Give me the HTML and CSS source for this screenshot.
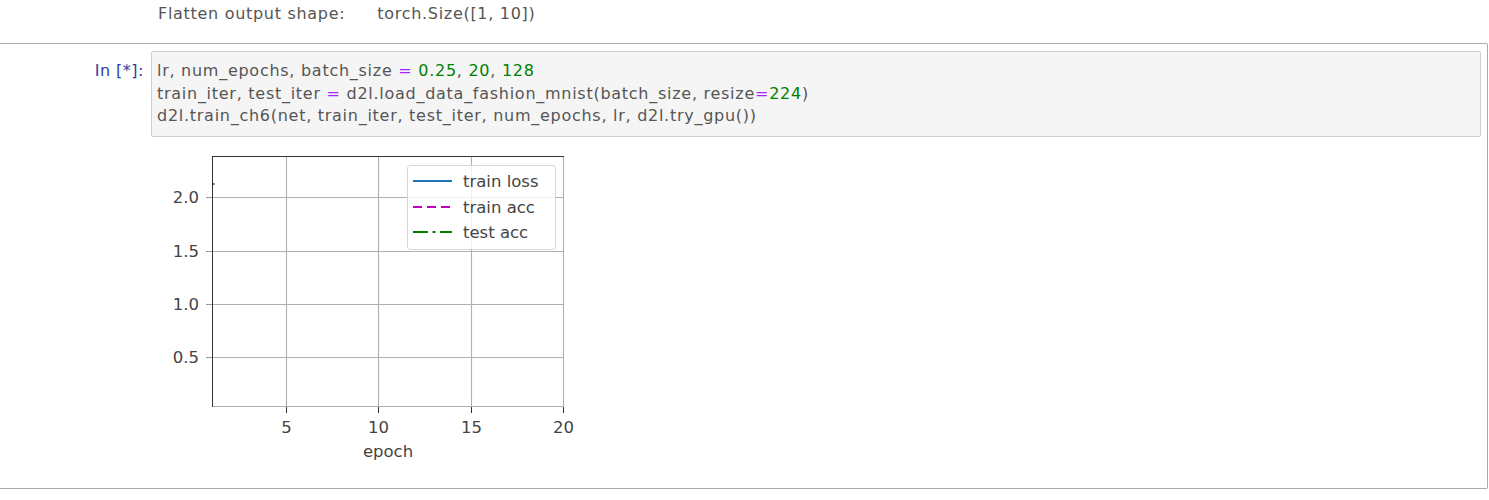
FILE: index.html
```html
<!DOCTYPE html>
<html>
<head>
<meta charset="utf-8">
<link rel="stylesheet" href="styles.css">
</head>
<body>
<div class="prev-output">Flatten output shape:<span class="tab"></span>torch.Size([1, 10])</div>
<div class="cell">
  <div class="input-row">
    <div class="prompt">In&nbsp;[*]:</div>
    <div class="input-area"><pre class="code">lr, num_epochs, batch_size <span class="op">=</span> <span class="num">0.25</span>, <span class="num">20</span>, <span class="num">128</span>
train_iter, test_iter <span class="op">=</span> d2l.load_data_fashion_mnist(batch_size, resize<span class="op">=</span><span class="num">224</span>)
d2l.train_ch6(net, train_iter, test_iter, num_epochs, lr, d2l.try_gpu())</pre></div>
  </div>
  <div class="output-row">
    <div class="prompt-spacer"></div>
    <svg class="plot" width="440" height="330" viewBox="0 0 440 330">
      <rect x="61" y="16" width="352" height="251" fill="#fff"/>
      <g stroke="#b0b0b0" stroke-width="1.1">
        <line x1="135.5" y1="16" x2="135.5" y2="267"/>
        <line x1="227.5" y1="16" x2="227.5" y2="267"/>
        <line x1="320.5" y1="16" x2="320.5" y2="267"/>
        <line x1="412.5" y1="16" x2="412.5" y2="267"/>
        <line x1="61" y1="57.5" x2="413" y2="57.5"/>
        <line x1="61" y1="111.5" x2="413" y2="111.5"/>
        <line x1="61" y1="164.5" x2="413" y2="164.5"/>
        <line x1="61" y1="217.5" x2="413" y2="217.5"/>
        <line x1="61" y1="266.5" x2="413" y2="266.5"/>
      </g>
      <g stroke="#333" stroke-width="1">
        <line x1="61.5" y1="16" x2="61.5" y2="267"/>
        <line x1="61" y1="16.5" x2="413" y2="16.5"/>
        <line x1="55" y1="57.5" x2="61" y2="57.5" stroke="#999"/>
        <line x1="55" y1="111.5" x2="61" y2="111.5" stroke="#999"/>
        <line x1="55" y1="164.5" x2="61" y2="164.5" stroke="#999"/>
        <line x1="55" y1="217.5" x2="61" y2="217.5" stroke="#999"/>
        <line x1="135.5" y1="267" x2="135.5" y2="273"/>
        <line x1="227.5" y1="267" x2="227.5" y2="273"/>
        <line x1="320.5" y1="267" x2="320.5" y2="273"/>
        <line x1="412.5" y1="267" x2="412.5" y2="273"/>
      </g>
      <rect x="62" y="43" width="1.5" height="2" fill="#1f77b4"/>
      <g class="tick" text-anchor="end">
        <text x="48" y="63">2.0</text>
        <text x="48" y="117">1.5</text>
        <text x="48" y="170">1.0</text>
        <text x="48" y="223">0.5</text>
      </g>
      <g class="tick" text-anchor="middle">
        <text x="135.5" y="293">5</text>
        <text x="227.5" y="293">10</text>
        <text x="320.5" y="293">15</text>
        <text x="412.5" y="293">20</text>
        <text x="237" y="317">epoch</text>
      </g>
      <rect x="256.5" y="25.5" width="148" height="84" rx="3" fill="#fff" fill-opacity="0.8" stroke="#ccc" stroke-opacity="0.8"/>
      <line x1="262" y1="41" x2="301" y2="41" stroke="#1f77b4" stroke-width="2"/>
      <line x1="262" y1="67" x2="301" y2="67" stroke="#bf00bf" stroke-width="2" stroke-dasharray="9 5"/>
      <line x1="262" y1="92" x2="301" y2="92" stroke="#008000" stroke-width="2" stroke-dasharray="15 4.5 3 4.5"/>
      <g class="tick">
        <text x="312" y="47">train loss</text>
        <text x="312" y="73">train acc</text>
        <text x="312" y="98">test acc</text>
      </g>
    </svg>
  </div>
</div>
</body>
</html>
```
FILE: styles.css
```css
html, body {
  margin: 0;
  padding: 0;
  background: #fff;
}
body {
  width: 1489px;
  font-family: "DejaVu Sans", "Liberation Sans", sans-serif;
}
.prev-output {
  height: 43px;
  box-sizing: border-box;
  padding: 4px 0 0 158px;
  font-size: 16px;
  line-height: 20px;
  letter-spacing: 0.7px;
  color: #555;
  white-space: pre;
}
.tab {
  display: inline-block;
  width: 32px;
}
.cell {
  width: 1488px;
  height: 446px;
  box-sizing: border-box;
  border: 1px solid #ababab;
  border-left: none;
  border-radius: 0 2px 2px 0;
}
.input-row {
  display: flex;
  padding-top: 7px;
}
.prompt {
  width: 151px;
  flex: none;
  box-sizing: border-box;
  padding: 9px 7px 0 0;
  text-align: right;
  color: #303f9f;
  font-size: 16px;
  line-height: 22.5px;
  letter-spacing: 0.5px;
}
.input-area {
  flex: 1;
  margin-right: 6px;
  border: 1px solid #cfcfcf;
  border-radius: 2px;
  background: #f5f5f5;
  height: 86px;
  box-sizing: border-box;
  padding: 8px 5px;
}
.code {
  margin: 0;
  font-family: "DejaVu Sans", "Liberation Sans", sans-serif;
  font-size: 16px;
  line-height: 22.5px;
  letter-spacing: 0.73px;
  color: #555;
}
.op {
  color: #aa22ff;
}
.num {
  color: #008000;
}
.output-row {
  display: flex;
  padding-top: 3px;
}
.prompt-spacer {
  width: 151px;
  flex: none;
}
.plot {
  display: block;
}
.plot text {
  font-family: "DejaVu Sans", sans-serif;
  font-size: 16.5px;
  fill: #444;
}
```
